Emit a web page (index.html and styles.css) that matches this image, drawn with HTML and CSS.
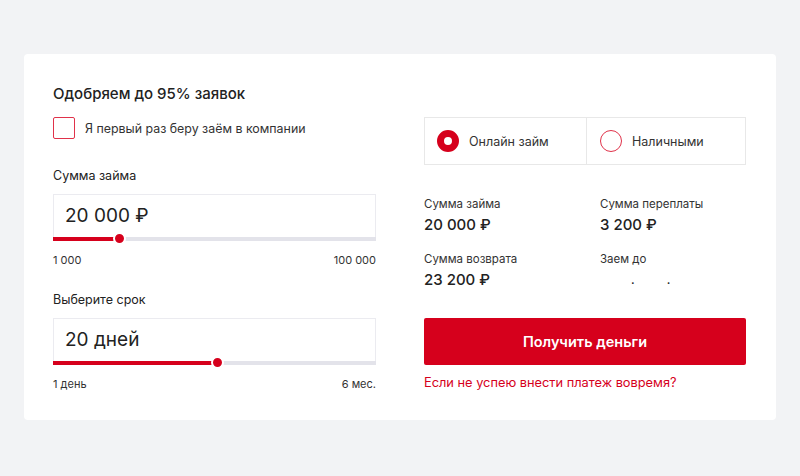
FILE: index.html
```html
<!DOCTYPE html>
<html lang="ru">
<head>
    <meta charset="UTF-8">
    <meta name="viewport" content="width=device-width, initial-scale=1.0">
    <title>Калькулятор займа</title>
    <link rel="stylesheet" href="styles.css">
</head>
<body>
    <div class="calc">
        <div class="calc-left">
            <h2 class="calc-title">Одобряем до 95% заявок</h2>

            <label class="check-row">
                <span class="checkbox"></span>
                <span>Я первый раз беру заём в компании</span>
            </label>

            <div class="range-group">
                <div class="range-label">Сумма займа</div>
                <div class="range-field">20 000 ₽</div>
                <div class="track">
                    <div class="track-fill" style="width: 67px"></div>
                    <div class="thumb" style="left: 67px"></div>
                </div>
                <div class="range-limits">
                    <span>1 000</span>
                    <span>100 000</span>
                </div>
            </div>

            <div class="range-group">
                <div class="range-label">Выберите срок</div>
                <div class="range-field">20 дней</div>
                <div class="track">
                    <div class="track-fill" style="width: 165px"></div>
                    <div class="thumb" style="left: 165px"></div>
                </div>
                <div class="range-limits">
                    <span>1 день</span>
                    <span>6 мес.</span>
                </div>
            </div>
        </div>

        <div class="calc-right">
            <div class="radio-box">
                <label class="radio-item">
                    <span class="radio checked"></span>
                    <span>Онлайн займ</span>
                </label>
                <label class="radio-item">
                    <span class="radio"></span>
                    <span>Наличными</span>
                </label>
            </div>

            <div class="summary">
                <div class="summary-item">
                    <div class="summary-label">Сумма займа</div>
                    <div class="summary-value">20 000 ₽</div>
                </div>
                <div class="summary-item">
                    <div class="summary-label">Сумма переплаты</div>
                    <div class="summary-value">3 200 ₽</div>
                </div>
                <div class="summary-item">
                    <div class="summary-label">Сумма возврата</div>
                    <div class="summary-value">23 200 ₽</div>
                </div>
                <div class="summary-item">
                    <div class="summary-label">Заем до</div>
                    <div class="summary-value date"><span>.</span><span>.</span></div>
                </div>
            </div>

            <button type="button" class="get-button">Получить деньги</button>
            <a href="#" class="late-link">Если не успею внести платеж вовремя?</a>
        </div>
    </div>
</body>
</html>
```

FILE: styles.css
```css
body {
    margin: 0;
    padding: 54px 24px 0;
    background-color: #f2f3f5;
    color: #222;
    font-family: Inter, "Noto Sans", sans-serif;
}

.calc {
    background-color: #fff;
    border-radius: 4px;
    display: grid;
    grid-template-columns: 323px 322px;
    column-gap: 48px;
    padding: 30px 30px 41px 29px;
    height: 295px;
}

.calc-title {
    margin: 0 0 13px;
    font-size: 15px;
    font-weight: 500;
    line-height: 20px;
}

.check-row {
    display: flex;
    align-items: center;
    gap: 10px;
    font-size: 12.4px;
    color: #333;
}

.checkbox {
    width: 20px;
    height: 20px;
    border: 1px solid #e0324a;
    border-radius: 2px;
}

.range-group {
    margin-top: 28px;
}

.range-group + .range-group {
    margin-top: 24px;
}

.range-label {
    font-size: 12.5px;
    line-height: 18px;
    margin-bottom: 9px;
}

.range-field {
    height: 43px;
    border: 1px solid #ebebf0;
    border-bottom: none;
    padding-left: 11px;
    display: flex;
    align-items: center;
    font-size: 19px;
    padding-bottom: 2px;
    box-sizing: border-box;
}

.track {
    position: relative;
    height: 4px;
    background-color: #e3e3ea;
}

.track-fill {
    height: 100%;
    background-color: #d6001c;
}

.thumb {
    position: absolute;
    top: 50%;
    width: 9px;
    height: 9px;
    margin: -7px 0 0 -7px;
    border: 2.5px solid #fff;
    border-radius: 50%;
    background-color: #d6001c;
}

.range-limits {
    display: flex;
    justify-content: space-between;
    font-size: 11px;
    color: #333;
    margin-top: 12px;
}

.calc-right {
    padding-top: 33px;
}

.radio-box {
    display: grid;
    grid-template-columns: 161px 1fr;
    border: 1px solid #e8e8e8;
    height: 48px;
    box-sizing: border-box;
}

.radio-item {
    display: flex;
    align-items: center;
    gap: 10px;
    padding-left: 12px;
    font-size: 12.5px;
    color: #333;
}

.radio-item + .radio-item {
    border-left: 1px solid #e8e8e8;
    padding-left: 13px;
}

.radio {
    width: 20px;
    height: 20px;
    border: 1px solid #e0324a;
    border-radius: 50%;
    box-sizing: content-box;
}

.radio.checked {
    width: 8px;
    height: 8px;
    border: 7px solid #d6001c;
}

.summary {
    display: grid;
    grid-template-columns: 176px 1fr;
    row-gap: 16px;
    margin-top: 31px;
}

.summary-label {
    font-size: 11.5px;
    color: #333;
    line-height: 16px;
}

.summary-value {
    font-size: 15px;
    font-weight: 500;
    line-height: 20px;
    margin-top: 3px;
}

.summary-value.date {
    display: flex;
    gap: 32px;
    padding-left: 31px;
    font-size: 12px;
}

.get-button {
    margin-top: 28px;
    width: 100%;
    height: 47px;
    border: none;
    border-radius: 2px;
    background-color: #d6001c;
    color: #fff;
    font-family: inherit;
    font-size: 14.5px;
    font-weight: 600;
    cursor: pointer;
}

.late-link {
    display: block;
    margin-top: 10px;
    font-size: 12.8px;
    color: #d6001c;
    text-decoration: none;
}
```
